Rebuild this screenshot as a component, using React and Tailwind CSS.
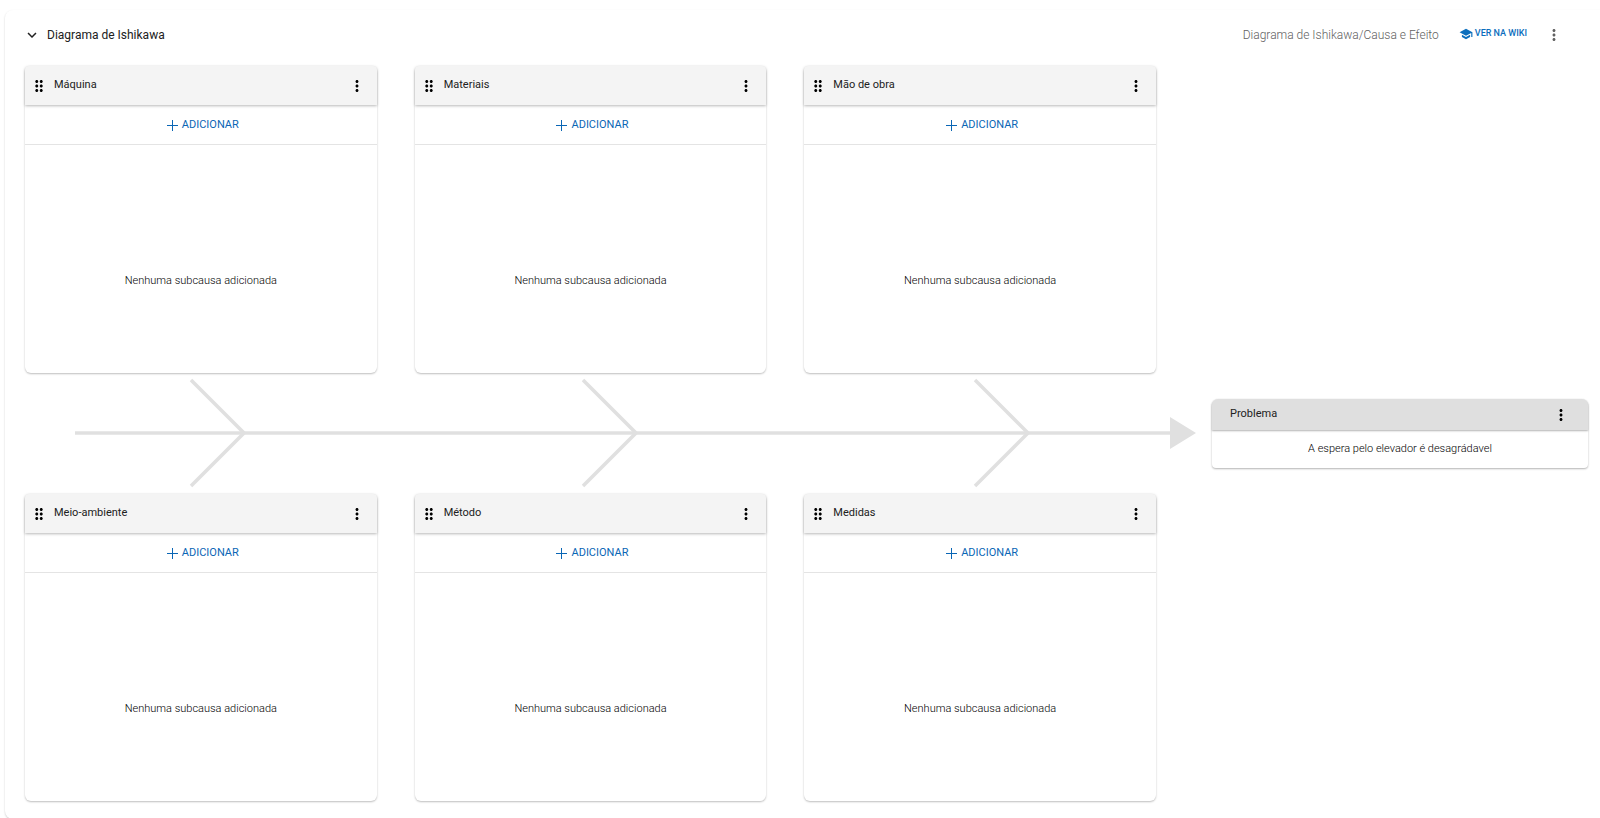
import React from 'react';
import { MdDragIndicator, MdExpandMore, MdMoreVert, MdSchool } from 'react-icons/md';

const topCauses = ['Máquina', 'Materiais', 'Mão de obra'];
const bottomCauses = ['Meio-ambiente', 'Método', 'Medidas'];

const MenuButton = ({ label, className = 'text-black' }) => (
    <button type="button" aria-label={label} className={`cursor-pointer ${className}`}>
        <MdMoreVert size={18} />
    </button>
);

const CauseCard = ({ title }) => (
    <article className="h-[307px] flex flex-col bg-white rounded-md shadow-[0_1px_2px_rgba(0,0,0,0.26)]">
        <header className="h-[39px] shrink-0 flex items-center bg-[#f4f4f4] pl-[5px] pr-[11px] rounded-t-sm shadow-[0_1px_3px_rgba(0,0,0,0.28)]">
            <MdDragIndicator size={18} className="text-black" />
            <h2 className="ml-1.5 flex-1 text-[11px]">{title}</h2>
            <MenuButton label={`Opções de ${title}`} />
        </header>
        <button
            type="button"
            className="h-10 shrink-0 flex items-center justify-center gap-1 border-b border-[#e4e4e4] pt-0.5 pl-1 text-[11px] text-[#0a66b5] cursor-pointer"
        >
            <svg width="11" height="11" viewBox="0 0 11 11" stroke="currentColor" fill="none" aria-hidden="true">
                <path d="M5.5 0v11M0 5.5h11" />
            </svg>
            ADICIONAR
        </button>
        <p className="flex-1 flex items-center justify-center pt-11 text-[11px] font-light text-black">Nenhuma subcausa adicionada</p>
    </article>
);

const CauseRow = ({ causes }) => (
    <div className="grid grid-cols-3 gap-[38px] pr-10">
        {causes.map((title) => (
            <CauseCard key={title} title={title} />
        ))}
    </div>
);

const Fishbone = () => (
    <svg viewBox="0 0 1171 121" className="block w-full" aria-hidden="true">
        <g stroke="#e0e0e0" strokeWidth="3.5" fill="none">
            <path d="M50 60H1146" />
            <path d="M166 7L219 60L166 113" />
            <path d="M558 7L611 60L558 113" />
            <path d="M950 7L1003 60L950 113" />
        </g>
        <path d="M1145 44L1171 60L1145 76Z" fill="#e0e0e0" />
    </svg>
);

const App = () => {
    return (
        <div className="min-h-screen overflow-hidden bg-white pl-[5px] pt-2.5 font-[Roboto,sans-serif] text-[#212121]">
            <main className="bg-white rounded-l-lg pl-5 pr-3 pb-4.5 shadow-[0_1px_2px_rgba(0,0,0,0.2)]">
                <header className="h-[50px] mb-1.5 flex items-center">
                    <button type="button" aria-label="Recolher" className="-ml-0.5 cursor-pointer">
                        <MdExpandMore size={18} />
                    </button>
                    <h1 className="ml-1.5 flex-1 text-xs">Diagrama de Ishikawa</h1>
                    <span className="text-xs font-light text-[#616161]">Diagrama de Ishikawa/Causa e Efeito</span>
                    <a href="#wiki" className="ml-5 flex items-center gap-0.5 pb-0.5 text-[9px] font-medium text-[#0a6ebd]">
                        <MdSchool size={14} />
                        VER NA WIKI
                    </a>
                    <MenuButton label="Mais opções" className="ml-[18px] mr-[25px] text-[#616161]" />
                </header>

                <div className="flex items-center gap-4">
                    <div className="flex-1">
                        <CauseRow causes={topCauses} />
                        <Fishbone />
                        <CauseRow causes={bottomCauses} />
                    </div>
                    <article className="w-[376px] bg-white rounded-t-md rounded-b-sm shadow-[0_1px_2px_rgba(0,0,0,0.3)]">
                        <header className="h-[31px] flex items-center bg-[#dfdfdf] px-[18px] rounded-t-md shadow-[0_1px_2px_rgba(0,0,0,0.3)]">
                            <h2 className="flex-1 text-[11px]">Problema</h2>
                            <MenuButton label="Opções do problema" />
                        </header>
                        <p className="h-[38px] flex items-center justify-center text-[11px] font-light text-black">
                            A espera pelo elevador é desagrádavel
                        </p>
                    </article>
                </div>
            </main>
        </div>
    );
};

export default App;
